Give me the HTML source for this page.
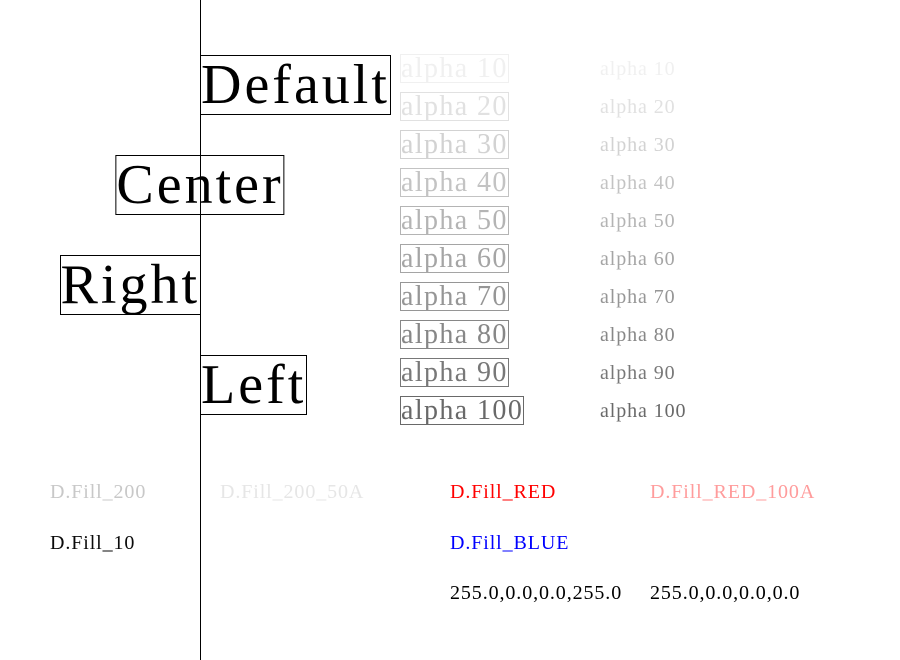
<!DOCTYPE html>
<html><head><meta charset="utf-8"><style>
html,body{margin:0;padding:0;background:#fff;width:900px;height:660px;overflow:hidden}
body{position:relative;font-family:"Liberation Serif","Times New Roman",serif}
.v{position:absolute;left:200px;top:0;width:1px;height:660px;background:#000}
.b{position:absolute;border:1px solid #000;font-size:56px;line-height:58px;white-space:nowrap;color:#000;letter-spacing:3px;padding:0}
.a{position:absolute;left:400px;font-size:28px;line-height:27px;border:1px solid;white-space:nowrap;letter-spacing:1.4px;padding:0}
.s{position:absolute;left:600px;font-size:20px;line-height:24px;white-space:nowrap;letter-spacing:0.9px}
.t{position:absolute;font-size:20px;line-height:24px;white-space:nowrap;letter-spacing:0.9px}
</style></head><body>
<div class="v"></div>
<div class="b" style="left:200px;top:55px">Default</div>
<div class="b" style="left:200px;top:155px;transform:translateX(-50%)">Center</div>
<div class="b" style="right:699px;top:255px">Right</div>
<div class="b" style="left:200px;top:355px">Left</div>

<div class="a" style="top:54px;color:#f0f0f0;border-color:#f0f0f0">alpha 10</div>
<div class="a" style="top:92px;color:#e1e1e1;border-color:#e1e1e1">alpha 20</div>
<div class="a" style="top:130px;color:#d2d2d2;border-color:#d2d2d2">alpha 30</div>
<div class="a" style="top:168px;color:#c3c3c3;border-color:#c3c3c3">alpha 40</div>
<div class="a" style="top:206px;color:#b4b4b4;border-color:#b4b4b4">alpha 50</div>
<div class="a" style="top:244px;color:#a5a5a5;border-color:#a5a5a5">alpha 60</div>
<div class="a" style="top:282px;color:#969696;border-color:#969696">alpha 70</div>
<div class="a" style="top:320px;color:#878787;border-color:#878787">alpha 80</div>
<div class="a" style="top:358px;color:#787878;border-color:#787878">alpha 90</div>
<div class="a" style="top:396px;color:#696969;border-color:#696969">alpha 100</div>

<div class="s" style="top:57px;color:#f0f0f0">alpha 10</div>
<div class="s" style="top:95px;color:#e1e1e1">alpha 20</div>
<div class="s" style="top:133px;color:#d2d2d2">alpha 30</div>
<div class="s" style="top:171px;color:#c3c3c3">alpha 40</div>
<div class="s" style="top:209px;color:#b4b4b4">alpha 50</div>
<div class="s" style="top:247px;color:#a5a5a5">alpha 60</div>
<div class="s" style="top:285px;color:#969696">alpha 70</div>
<div class="s" style="top:323px;color:#878787">alpha 80</div>
<div class="s" style="top:361px;color:#787878">alpha 90</div>
<div class="s" style="top:399px;color:#696969">alpha 100</div>

<div class="t" style="left:50px;top:480px;color:#c8c8c8">D.Fill_200</div>
<div class="t" style="left:220px;top:480px;color:#e6e6e6">D.Fill_200_50A</div>
<div class="t" style="left:450px;top:480px;color:#ff0000">D.Fill_RED</div>
<div class="t" style="left:650px;top:480px;color:#ff9c9c">D.Fill_RED_100A</div>
<div class="t" style="left:50px;top:531px;color:#0a0a0a">D.Fill_10</div>
<div class="t" style="left:450px;top:531px;color:#0000ff">D.Fill_BLUE</div>
<div class="t" style="left:450px;top:581px;color:#000">255.0,0.0,0.0,255.0</div>
<div class="t" style="left:650px;top:581px;color:#000">255.0,0.0,0.0,0.0</div>
</body></html>
